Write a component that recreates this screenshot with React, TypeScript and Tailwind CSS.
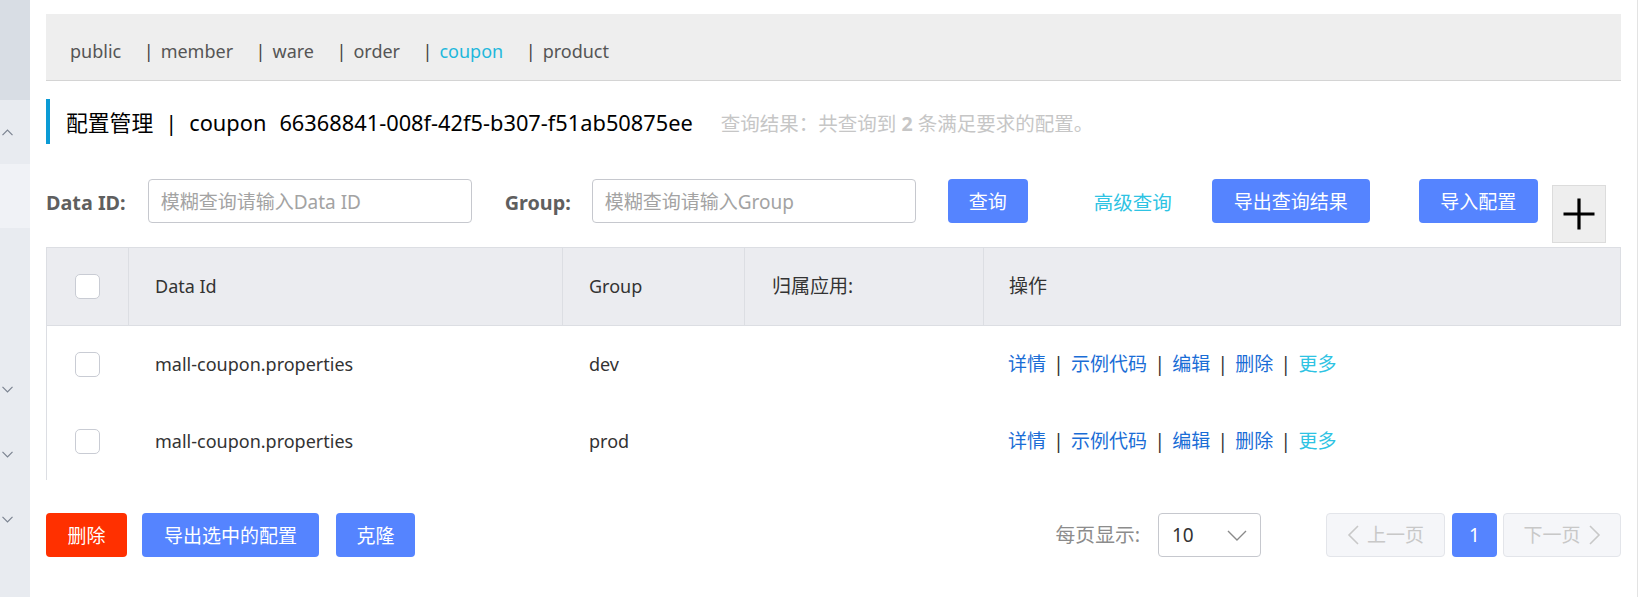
import React from "react";

const ChevronDown = ({ className = "" }: { className?: string }) => (
  <svg className={className} width="11" height="7" viewBox="0 0 11 7" fill="none">
    <path d="M0.5 0.8 L5.5 5.8 L10.5 0.8" stroke="#7b8391" strokeWidth="1.2" />
  </svg>
);

const ChevronUp = () => (
  <svg width="11" height="7" viewBox="0 0 11 7" fill="none">
    <path d="M0.5 6.2 L5.5 1.2 L10.5 6.2" stroke="#7b8391" strokeWidth="1.2" />
  </svg>
);

const Checkbox = () => (
  <div className="w-[25px] h-[25px] rounded-[5px] border border-[#c9ccd4] bg-white" />
);

const Sep = () => <span className="mx-[7.3px] text-[#333]">|</span>;

const rows = [
  { id: "mall-coupon.properties", group: "dev" },
  { id: "mall-coupon.properties", group: "prod" },
];

export default function App() {
  return (
    <div className="flex w-[1640px] h-[597px] overflow-hidden bg-white font-['Noto_Sans','Noto_Sans_CJK_SC',sans-serif]">
      {/* sidebar */}
      <div className="w-[30px] flex flex-col shrink-0">
        <div className="h-[100px] bg-[#d8dde4]" />
        <div className="h-[64px] bg-[#e8ebf0] flex items-center pl-[2px]">
          <ChevronUp />
        </div>
        <div className="h-[64px] bg-[#f0f2f6]" />
        <div className="flex-1 bg-[#e8ebf0] flex flex-col">
          <div className="h-[129px]" />
          <div className="h-[65px] flex items-center pl-[2px]">
            <ChevronDown />
          </div>
          <div className="h-[65px] flex items-center pl-[2px]">
            <ChevronDown />
          </div>
          <div className="h-[65px] flex items-center pl-[2px]">
            <ChevronDown />
          </div>
        </div>
      </div>

      {/* main */}
      <div className="flex-1 flex flex-col pl-[16px] pr-[16px]">
        {/* tabs */}
        <div className="mt-[14px] h-[67px] bg-[#eeeeee] border-b border-[#d4d4d4] flex items-center pl-[24px] pt-[8px] text-[18px] text-[#555]">
          <span>public</span>
          {["member", "ware", "order", "coupon", "product"].map((t) => (
            <span key={t} className="flex items-center ml-[22.5px]">
              <span className="text-[#444]">|</span>
              <span className={"ml-[7px] " + (t === "coupon" ? "text-[#1fb8dc]" : "")}>{t}</span>
            </span>
          ))}
        </div>

        {/* title */}
        <div className="mt-[18px] flex items-center">
          <div className="w-[4px] h-[45px] bg-[#0b9bd5]" />
          <div className="ml-[16px] pt-[4px] flex items-center text-[21.8px] text-black">
            <span>配置管理</span>
            <span className="mx-[12px]">|</span>
            <span>coupon</span>
            <span className="ml-[13px]">66368841-008f-42f5-b307-f51ab50875ee</span>
            <span className="ml-[28px] text-[19.5px] text-[#c6c6c6]">
              查询结果：共查询到 <b className="font-bold">2</b> 条满足要求的配置。
            </span>
          </div>
        </div>

        {/* filter row */}
        <div className="mt-[35px] flex items-start">
          <div className="h-[44px] pt-[3px] flex items-center text-[19.8px] font-bold text-[#5f5f5f]">Data ID:</div>
          <div className="ml-[22px] w-[324px] h-[44px] pt-[3px] rounded-[4px] border border-[#c6c8ce] flex items-center px-[12px] text-[19px] text-[#a3a3a3]">
            模糊查询请输入Data ID
          </div>
          <div className="ml-[33px] h-[44px] pt-[3px] flex items-center text-[19.8px] font-bold text-[#5f5f5f]">Group:</div>
          <div className="ml-[21px] w-[324px] h-[44px] pt-[3px] rounded-[4px] border border-[#c6c8ce] flex items-center px-[12px] text-[19px] text-[#a3a3a3]">
            模糊查询请输入Group
          </div>
          <div className="ml-[32px] w-[80px] h-[44px] pt-[3px] rounded-[4px] bg-[#5584ff] text-white text-[19px] flex items-center justify-center">
            查询
          </div>
          <div className="ml-[66px] h-[44px] pt-[3px] flex items-center text-[19.5px] text-[#2ec3e3]">高级查询</div>
          <div className="ml-[40px] w-[158px] h-[44px] pt-[3px] rounded-[4px] bg-[#5584ff] text-white text-[19px] flex items-center justify-center">
            导出查询结果
          </div>
          <div className="ml-[49px] w-[119px] h-[44px] pt-[3px] rounded-[4px] bg-[#5584ff] text-white text-[19px] flex items-center justify-center">
            导入配置
          </div>
          <div className="ml-[14px] mt-[6px] w-[54px] h-[58px] bg-[#eeeeee] border border-[#dcdcdc] flex items-center justify-center">
            <svg width="34" height="34" viewBox="0 0 34 34">
              <path d="M17 1.5 V32.5 M1.5 17 H32.5" stroke="#000" strokeWidth="3.2" />
            </svg>
          </div>
        </div>

        {/* table */}
        <div className="mt-[4px] border-l border-[#dcdee3]">
          <div className="grid grid-cols-[81px_434px_182px_239px_1fr] h-[79px] bg-[#ebecf0] border-t border-b border-r border-[#dcdee3] text-[18px] text-[#333]">
            <div className="flex items-center justify-center">
              <Checkbox />
            </div>
            <div className="border-l border-[#dcdee3] flex items-center pl-[26px]">Data Id</div>
            <div className="border-l border-[#dcdee3] flex items-center pl-[26px]">Group</div>
            <div className="border-l border-[#dcdee3] flex items-center pl-[27px] text-[19px]">归属应用:</div>
            <div className="border-l border-[#dcdee3] flex items-center pl-[25px] text-[19px]">操作</div>
          </div>
          {rows.map((r, i) => (
            <div key={i} className="grid grid-cols-[81px_434px_182px_239px_1fr] h-[77px] text-[18px] text-[#333]">
              <div className="flex items-center justify-center">
                <Checkbox />
              </div>
              <div className="flex items-center pl-[27px]">{r.id}</div>
              <div className="flex items-center pl-[27px]">{r.group}</div>
              <div />
              <div className="flex items-center pl-[25px] text-[19px]">
                <span className="text-[#1a6dd6]">详情</span>
                <Sep />
                <span className="text-[#1a6dd6]">示例代码</span>
                <Sep />
                <span className="text-[#1a6dd6]">编辑</span>
                <Sep />
                <span className="text-[#1a6dd6]">删除</span>
                <Sep />
                <span className="text-[#2ec3e3]">更多</span>
              </div>
            </div>
          ))}
        </div>

        {/* bottom row */}
        <div className="mt-[33px] flex items-center justify-between">
          <div className="flex items-center text-[19px] text-white">
            <div className="w-[81px] h-[44px] pt-[2px] rounded-[4px] bg-[#ff3000] flex items-center justify-center">删除</div>
            <div className="ml-[15px] w-[177px] h-[44px] pt-[2px] rounded-[4px] bg-[#5584ff] flex items-center justify-center">
              导出选中的配置
            </div>
            <div className="ml-[17px] w-[79px] h-[44px] pt-[2px] rounded-[4px] bg-[#5584ff] flex items-center justify-center">克隆</div>
          </div>
          <div className="flex items-center text-[19px]">
            <span className="text-[#8c8c8c] text-[19.8px]">每页显示:</span>
            <div className="ml-[18px] w-[103px] h-[44px] rounded-[4px] border border-[#c6c8ce] flex items-center justify-between pl-[13px] pr-[13px] text-[#333]">
              <span>10</span>
              <svg width="20" height="11" viewBox="0 0 20 11" fill="none">
                <path d="M1 1 L10 10 L19 1" stroke="#8a8a8a" strokeWidth="1.4" />
              </svg>
            </div>
            <div className="ml-[65px] w-[119px] h-[44px] rounded-[4px] bg-[#f5f6f9] border border-[#e3e5ea] flex items-center justify-center text-[#c8c8c8]">
              <svg width="12" height="20" viewBox="0 0 12 20" fill="none" className="mr-[8px]">
                <path d="M11 1 L2 10 L11 19" stroke="#c8c8c8" strokeWidth="1.6" />
              </svg>
              上一页
            </div>
            <div className="ml-[7px] w-[45px] h-[44px] rounded-[4px] bg-[#5584ff] flex items-center justify-center text-white">1</div>
            <div className="ml-[6px] w-[118px] h-[44px] rounded-[4px] bg-[#f5f6f9] border border-[#e3e5ea] flex items-center justify-center text-[#c8c8c8]">
              下一页
              <svg width="12" height="20" viewBox="0 0 12 20" fill="none" className="ml-[8px]">
                <path d="M1 1 L10 10 L1 19" stroke="#c8c8c8" strokeWidth="1.6" />
              </svg>
            </div>
          </div>
        </div>
      </div>

      {/* right edge */}
      <div className="w-[3px] border-l border-[#e3e3e3] shrink-0" />
    </div>
  );
}
